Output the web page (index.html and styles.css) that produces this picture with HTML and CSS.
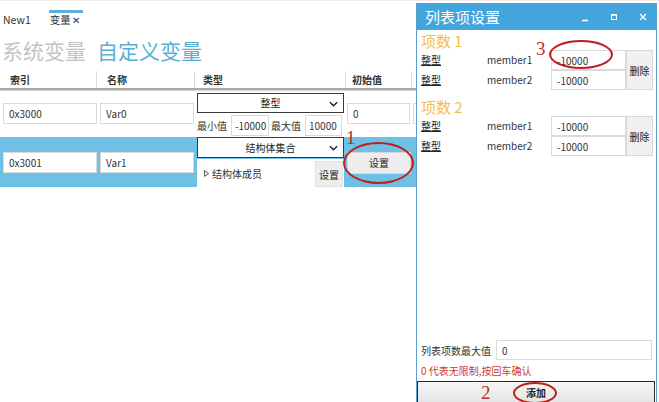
FILE: index.html
```html
<!DOCTYPE html>
<html lang="zh-CN">
<head>
<meta charset="utf-8">
<title>变量</title>
<link rel="stylesheet" href="styles.css">
</head>
<body>
<div class="page">
  <div class="main">
    <div class="tabs">
      <div class="tab">New1</div>
      <div class="tab active">变量<span class="x">✕</span></div>
    </div>
    <div class="heading">
      <span class="sys">系统变量</span>
      <span class="custom">自定义变量</span>
    </div>
    <div class="thead">
      <div class="th">索引</div>
      <div class="th">名称</div>
      <div class="th">类型</div>
      <div class="th">初始值</div>
      <div class="th last"></div>
    </div>
    <div class="trow row1">
      <div class="cell"><div class="inp">0x3000</div></div>
      <div class="cell"><div class="inp">Var0</div></div>
      <div class="cell type">
        <div class="sel">整型<svg class="chev" viewBox="0 0 10 6" width="9" height="6"><path d="M1 1 L5 5 L9 1" fill="none" stroke="#222" stroke-width="1.6"/></svg></div>
        <div class="minmax">
          <span class="lbl">最小值</span>
          <div class="inp small w38">-10000</div>
          <span class="lbl">最大值</span>
          <div class="inp small w36">10000</div>
        </div>
      </div>
      <div class="cell"><div class="inp init">0</div></div>
      <div class="cell"><div class="inp stub"></div></div>
    </div>
    <div class="trow row2">
      <div class="cell"><div class="inp">0x3001</div></div>
      <div class="cell"><div class="inp">Var1</div></div>
      <div class="cell type">
        <div class="sel">结构体集合<svg class="chev" viewBox="0 0 10 6" width="9" height="6"><path d="M1 1 L5 5 L9 1" fill="none" stroke="#222" stroke-width="1.6"/></svg></div>
        <div class="members">
          <span class="mem"><svg viewBox="0 0 6 8" width="5" height="7"><path d="M0.5 0.5 L5.5 4 L0.5 7.5 Z" fill="none" stroke="#333" stroke-width="1"/></svg>结构体成员</span>
          <div class="btn mini">设置</div>
        </div>
      </div>
      <div class="cell"><div class="btn setbtn">设置</div></div>
      <div class="cell"></div>
    </div>
  </div>

  <div class="window">
    <div class="titlebar">
      <span class="title">列表项设置</span>
      <div class="controls">
        <svg viewBox="0 0 10 10" width="10" height="10"><path d="M2 8.5 H8" stroke="#fff" stroke-width="1.6"/></svg>
        <svg viewBox="0 0 10 10" width="10" height="10"><rect x="2.5" y="2.5" width="5" height="5" fill="none" stroke="#fff" stroke-width="1"/><path d="M2.5 3 H7.5" stroke="#fff" stroke-width="1.6"/></svg>
        <svg viewBox="0 0 10 10" width="10" height="10"><path d="M2 2 L8 8 M8 2 L2 8" stroke="#fff" stroke-width="1.4"/></svg>
      </div>
    </div>
    <div class="wbody">
      <div class="group">
        <div class="ghead">项数 1</div>
        <div class="grows">
          <span class="glabel">整型</span><span class="gname">member1</span><div class="inp ginp">-10000</div>
          <span class="glabel">整型</span><span class="gname">member2</span><div class="inp ginp">-10000</div>
          <div class="btn del">删除</div>
        </div>
      </div>
      <div class="group g2">
        <div class="ghead">项数 2</div>
        <div class="grows">
          <span class="glabel">整型</span><span class="gname">member1</span><div class="inp ginp">-10000</div>
          <span class="glabel">整型</span><span class="gname">member2</span><div class="inp ginp">-10000</div>
          <div class="btn del">删除</div>
        </div>
      </div>
    </div>
    <div class="wfoot">
      <div class="maxrow">
        <span class="maxlbl">列表项数最大值</span>
        <div class="inp maxinp">0</div>
      </div>
      <div class="note">0 代表无限制,按回车确认</div>
      <div class="addbtn">添加</div>
    </div>
  </div>

  <div class="anno n1">1</div>
  <div class="anno n2">2</div>
  <div class="anno n3">3</div>
  <div class="ring r1"></div>
  <div class="ring r2"></div>
  <div class="ring r3"></div>
</div>
</body>
</html>
```

FILE: styles.css
```css
* { box-sizing: border-box; }
html, body { margin: 0; padding: 0; background: #fff; }
body {
  font-family: "Noto Sans CJK SC", "Noto Sans", "Liberation Sans", sans-serif;
  font-size: 10px;
  color: #222;
}
.page {
  position: relative;
  width: 659px;
  height: 402px;
  overflow: hidden;
  border-top: 1px solid #ececec;
}
.main { width: 416px; }

.tabs {
  display: flex;
  height: 29px;
  padding-top: 9px;
  padding-left: 3px;
}
.tab {
  padding-top: 3px;
  line-height: 14px;
  margin-right: 18px;
  color: #333;
  font-size: 10.5px;
}
.tab.active {
  border-top: 3px solid #5ab2db;
  padding-top: 0;
  padding-left: 1px;
  padding-right: 3px;
}
.tab .x { margin-left: 1px; font-size: 10px; }

.heading {
  height: 41px;
  padding-left: 2px;
  display: flex;
  align-items: center;
  gap: 11px;
  font-size: 21px;
  line-height: 24px;
  padding-bottom: 2px;
}
.sys { color: #c4c4c4; }
.custom { color: #58b0d6; }

.thead {
  display: grid;
  grid-template-columns: 97px 98px 151px 66px 4px;
  height: 19px;
  border-bottom: 2px solid #a8a8a8;
  box-shadow: 0 1px 1px #d8d8d8;
}
.th {
  border-right: 1px solid #dcdcdc;
  padding-left: 10px;
  line-height: 17px;
  font-weight: bold;
  color: #333;
}
.th:nth-child(2) { padding-left: 10px; }
.th:nth-child(3) { padding-left: 8px; }
.th:nth-child(4) { padding-left: 6px; }
.th.last { border-right: none; }

.trow {
  display: grid;
  grid-template-columns: 97px 98px 151px 66px 4px;
  align-items: center;
}
.row1 { height: 46px; }
.row2 { height: 50px; margin-top: 1px; background: #6ec0e5; align-items: stretch; }
.row2 .cell { display: flex; align-items: center; }
.row2 .cell.type { display: flex; flex-direction: column; align-items: stretch; }

.cell { padding-left: 3px; }
.inp {
  height: 21px;
  border: 1px solid #dadada;
  background: #fff;
  line-height: 19px;
  padding-left: 5px;
  color: #333;
  white-space: nowrap;
  overflow: hidden;
}
.cell > .inp { width: 94px; }
.cell > .inp.init { width: 63px; margin-left: -2px; }
.cell > .inp.stub { width: 6px; margin-left: -2px; }

.cell.type { padding-left: 2px; padding-right: 2px; }
.row1 .cell.type { align-self: start; padding-top: 3px; }
.sel {
  position: relative;
  height: 20px;
  border: 1px solid #3a3a3a;
  background: #fff;
  text-align: center;
  line-height: 18px;
  color: #222;
}
.chev { position: absolute; right: 5px; top: 7px; }
.minmax {
  display: flex;
  align-items: center;
  height: 21px;
  margin-top: 2px;
  gap: 2px;
}
.lbl { color: #333; width: 32px; }
.inp.small { padding-left: 3px; padding-right: 0; }
.w38 { width: 38px; }
.w36 { width: 37px; }

.row2 .sel { height: 21px; line-height: 19px; }
.members {
  flex: 1;
  margin-top: 1px;
  background: #fff;
  display: flex;
  align-items: stretch;
  justify-content: space-between;
}
.mem {
  display: flex;
  align-items: center;
  gap: 3px;
  padding-left: 7px;
  color: #333;
}
.btn {
  background: #ededed;
  border: 1px solid #d6d6d6;
  text-align: center;
  color: #222;
}
.btn.mini {
  width: 28px;
  margin: 2px 1px 0 0;
  display: flex;
  align-items: center;
  justify-content: center;
  border-color: #e0e0e0;
}
.btn.setbtn {
  width: 64px;
  height: 22px;
  line-height: 20px;
  margin-left: -2px;
  margin-top: 1px;
}

.window {
  position: absolute;
  left: 416px;
  top: 2px;
  width: 241px;
  height: 402px;
  border: 1px solid #5c9fcb;
  background: #fff;
  display: flex;
  flex-direction: column;
}
.titlebar {
  height: 26px;
  background: #42a5dc;
  display: flex;
  align-items: center;
  justify-content: space-between;
  padding-left: 8px;
  flex: none;
}
.title { color: #fff; font-size: 15px; line-height: 20px; }
.controls { display: flex; align-items: center; gap: 19px; padding-right: 8px; }
.controls svg { display: block; }

.wbody { flex: 1; padding: 0 3px 0 4px; }
.g2 { margin-top: 6px; }
.ghead {
  height: 20px;
  line-height: 20px;
  font-size: 15px;
  color: #f3bd4e;
  padding-top: 1px;
}
.grows {
  display: grid;
  grid-template-columns: 66px 64px 75px 27px;
  grid-template-rows: 20px 20px;
}
.glabel {
  text-decoration: underline;
  line-height: 20px;
  color: #222;
}
.gname { line-height: 20px; color: #333; }
.ginp { height: 20px; }
.del {
  grid-column: 4;
  grid-row: 1 / span 2;
  display: flex;
  align-items: center;
  justify-content: center;
  border-color: #d8d8d8;
  background: #f0f0f0;
}

.wfoot { flex: none; }
.maxrow {
  display: flex;
  align-items: center;
  padding-left: 4px;
  height: 20px;
}
.maxlbl { width: 75px; color: #333; white-space: nowrap; }
.maxinp { width: 156px; height: 20px; }
.note {
  height: 21px;
  line-height: 21px;
  padding-left: 4px;
  color: #d23a30;
}
.addbtn {
  height: 23px;
  border: 1px solid #2a2a2a;
  background: linear-gradient(#f6f6f6, #e4e4e4);
  text-align: center;
  line-height: 21px;
  font-weight: bold;
  color: #222;
  margin-right: 1px;
}

.anno {
  position: absolute;
  font-family: "Liberation Serif", serif;
  font-size: 19px;
  line-height: 19px;
  color: #c02a2a;
}
.n1 { left: 346px; top: 127px; }
.n2 { left: 481px; top: 382px; }
.n3 { left: 536px; top: 38px; }
.ring {
  position: absolute;
  border: 2.5px solid #c01d1d;
  border-radius: 50%;
}
.r1 { left: 343px; top: 141px; width: 71px; height: 42px; }
.r2 { left: 513px; top: 381px; width: 44px; height: 22px; }
.r3 { left: 549px; top: 39px; width: 64px; height: 29px; }
```
